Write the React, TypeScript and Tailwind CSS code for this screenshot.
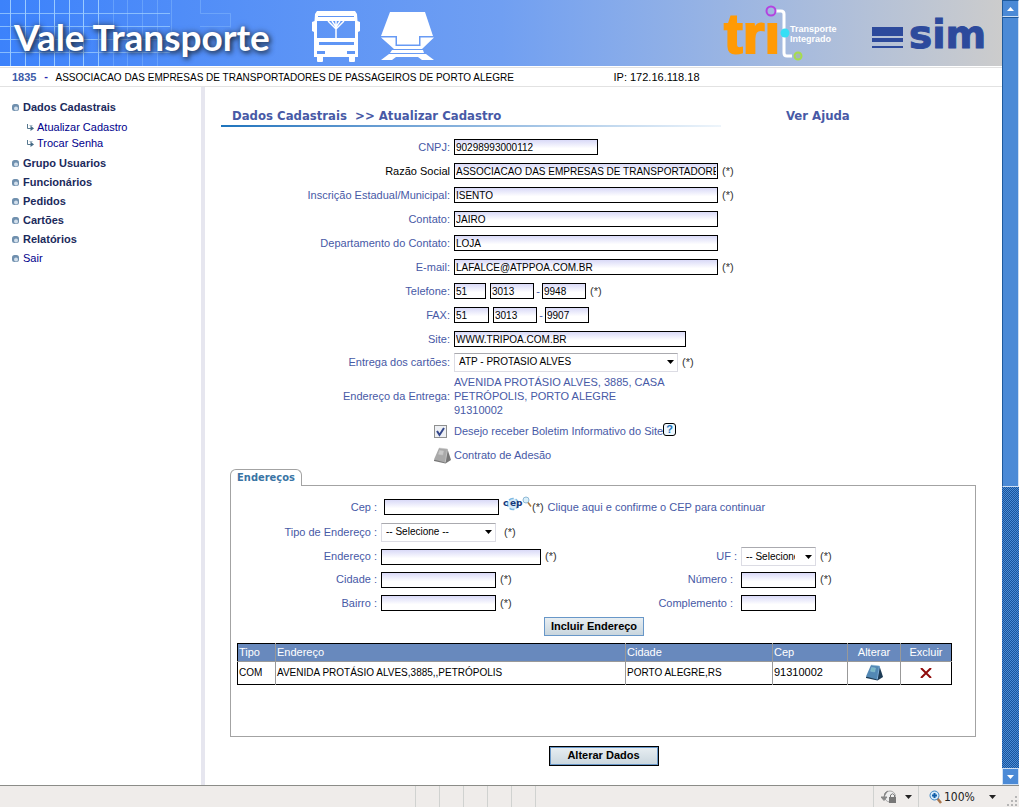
import React, { useState } from "react";

const INPUT =
  "h-4 border border-black bg-linear-to-b from-[#d9d9f7] to-white to-60% px-px pt-px text-[10px] leading-3 text-black outline-none";
const LABEL = "text-right text-[11px] text-[#4759a6]";

const menu = ["Grupo Usuarios", "Funcionários", "Pedidos", "Cartões", "Relatórios"];

const Required = () => <span className="text-[11px] text-[#333]">(*)</span>;

const Arrow = () => (
  <svg className="h-1 w-[7px]" viewBox="0 0 7 4" fill="currentColor" aria-hidden="true">
    <path d="M0 0h7L3.5 4z" />
  </svg>
);

const Bullet = () => (
  <svg className="h-[7px] w-[7px]" viewBox="0 0 7 7" aria-hidden="true">
    <rect width="7" height="7" rx="2.5" fill="#7090ae" />
    <circle cx="4" cy="4.5" r="2" fill="#d3e0ec" />
  </svg>
);

const SubArrow = () => (
  <svg className="h-[7px] w-2" viewBox="0 0 8 7" fill="none" stroke="#56788f" aria-hidden="true">
    <path d="M1.5 0v4.5H6" />
    <path d="M4.5 1.500v5.500L8 4.500z" fill="#456a85" stroke="none" />
    <path d="M3.5 1.5h3" stroke="#a9bccb" />
  </svg>
);

const BookIcon = ({ blue }: { blue?: boolean }) => (
  <svg className="h-[17px] w-[17px]" viewBox="0 0 17 17" aria-hidden="true">
    <path d="M13.500 2L17 13l-5.500 3.500L0 14v-1z" fill={blue ? "#1d3b55" : "#777"} />
    <path d="M5 1l8.500 1-2.500 13.500L0 12.500z" fill={blue ? "#5288b4" : "#a9a9a9"} />
    <path d="M5 1l8.500 1M5.500 3.500l4 .5-.8 4-4.200-.8z" fill={blue ? "#79b8c4" : "#c9c9c9"} stroke={blue ? "#8fc0d8" : "#c4c4c4"} strokeWidth=".5" />
    <path d="M13.500 2l-2.300 13.500" stroke={blue ? "#7fb0dc" : "#c4c4c4"} />
  </svg>
);

const BusIcon = () => (
  <svg className="h-[51px] w-12" viewBox="0 0 48 51" aria-hidden="true">
    <path
      fill="#fff"
      fillRule="evenodd"
      d="M5 0h38l2 3 .5 7 2.500 1v9l-2 1v25h-3v4q0 1-1 1h-4q-1 0-1-1v-4H11v4q0 1-1 1H6q-1 0-1-1v-4H2V21l-2-1v-9l2.500-1L3 3zM6 5v1h36V5zM5 10v17h38V10zM7 31v3h35v-3zM5 40v3h8v-3zm30 0v3h8v-3z"
    />
    <path d="M24 9v19M16 10l8 8 8-8M20 10l4 6 4-6" stroke="#fff" strokeWidth="1.500" fill="none" />
    <path d="M17 38h14l1 6H16z" fill="#fff" />
  </svg>
);

const TrainIcon = () => (
  <svg className="h-12 w-[53px]" viewBox="0 0 53 48" fill="#fff" aria-hidden="true">
    <path d="M9 0h35l8 24H38v8.500H16V24H0z" />
    <path d="M0 25.500h14.500V34h25v-8.500H53L41 37H13z" />
    <path d="M11 38h31l1 3H9zM8 42h37l8 6H41l-4-3H15l-4 3H0z" />
  </svg>
);

const TriLogo = () => (
  <svg className="h-[58px] w-[116px] overflow-visible" viewBox="0 0 116 58" role="img" aria-label="tri Transporte Integrado">
    <text x="1" y="49" fill="#ff9a05" stroke="#ff9a05" strokeWidth="2" className="font-['Liberation_Sans',sans-serif] text-[56px] font-bold">
      trı
    </text>
    <path d="M52 7h6q3 0 3 3v39q0 3 3 3h5" fill="none" stroke="#fff" strokeWidth="3" />
    <circle cx="48" cy="7" r="4.500" fill="none" stroke="#b443e0" strokeWidth="2" />
    <circle cx="62" cy="29" r="4.500" fill="#35dff5" />
    <circle cx="75" cy="52" r="3.500" fill="#a5b7b5" stroke="#a6dd4b" strokeWidth="2" />
    <g fill="#fff" className="font-['Liberation_Sans',sans-serif] text-[9px] font-bold">
      <text x="67" y="28">Transporte</text>
      <text x="67" y="38">Integrado</text>
    </g>
  </svg>
);

const SimLogo = () => (
  <svg className="h-[34px] w-[115px] overflow-visible" viewBox="0 0 115 34" fill="#2d4a9c" role="img" aria-label="sim">
    <path d="M1 11h31v9H1zM1 22h31v4H1zM1 30h31v2H1z" />
    <text x="38" y="32" stroke="#2d4a9c" className="font-['DejaVu_Sans',sans-serif] text-[39px] font-bold">
      sim
    </text>
  </svg>
);

const Banner = () => (
  <header className="relative flex h-[66px] items-center bg-linear-to-r from-[#3c82fb] via-[#709ff2] via-50% to-[#cccccc] pr-4 pl-3.5">
    <svg className="absolute top-0 left-0 h-[66px] w-60" viewBox="0 0 240 66" stroke="#9acaff" aria-hidden="true">
      <path fill="none" d="M10.500 0v66M25.500 0v66M39.500 0v66M54.500 0v66M69.500 0v66M83.500 0v66M98.500 0v66" />
      <path fill="none" d="M0 13.500h170M0 26.500h170M0 39.500h170M0 52.500h170" opacity=".8" />
      <path fill="none" d="M113.500 0v66M127.500 0v66M142.500 0v66M157.500 0v66M171.500 0v40M200.500 0v13.500h30v14M200 26.500h30" opacity=".35" />
    </svg>
    <h1 className="relative w-[298px] pt-2 font-['Lato','Open_Sans',sans-serif] text-[37px] leading-[50px] font-bold whitespace-nowrap text-white [text-shadow:2px_2px_5px_#1f3350,0_0_6px_#3d5b8c]">
      Vale Transporte
    </h1>
    <div className="relative flex items-center gap-[21px] pt-1.5">
      <BusIcon />
      <TrainIcon />
    </div>
    <div className="ml-auto flex items-center gap-8">
      <TriLogo />
      <SimLogo />
    </div>
  </header>
);

const Sidebar = () => (
  <nav className="w-[201px] shrink-0 pt-[11px] pl-3 text-[11px] text-[#00008c]">
    <a href="#dados" className="flex h-[19px] items-center gap-1 font-bold text-[#1b2a5c]">
      <Bullet />
      Dados Cadastrais
    </a>
    <ul className="mt-0.5 mb-[3px] pl-3.5">
      {["Atualizar Cadastro", "Trocar Senha"].map((item) => (
        <li key={item}>
          <a href="#sub" className="flex h-4 items-center gap-[3px]">
            <SubArrow />
            {item}
          </a>
        </li>
      ))}
    </ul>
    {menu.map((item) => (
      <a key={item} href="#menu" className="flex h-[19px] items-center gap-1 font-bold text-[#1b2a5c]">
        <Bullet />
        {item}
      </a>
    ))}
    <a href="#sair" className="flex h-[19px] items-center gap-1">
      <Bullet />
      Sair
    </a>
  </nav>
);

type FieldProps = {
  id: string;
  label: string;
  value?: string;
  width?: string;
  required?: boolean;
  dark?: boolean;
};

const Field = ({ id, label, value = "", width = "w-[264px]", required, dark }: FieldProps) => (
  <div className="flex h-6 items-center gap-1">
    <label htmlFor={id} className={`w-[229px] text-right text-[11px] ${dark ? "text-black" : "text-[#4759a6]"}`}>
      {label}
    </label>
    <input id={id} defaultValue={value} className={`${INPUT} ${width}`} />
    {required && <Required />}
  </div>
);

type PhoneProps = {
  id: string;
  label: string;
  parts: string[];
  areaWidth?: string;
  required?: boolean;
};

const PhoneField = ({ id, label, parts, areaWidth = "w-8", required }: PhoneProps) => (
  <div className="flex h-6 items-center gap-1">
    <label htmlFor={id} className={`w-[229px] ${LABEL}`}>
      {label}
    </label>
    <input id={id} defaultValue={parts[0]} className={`${INPUT} ${areaWidth}`} />
    <div className="flex items-center text-[11px] text-[#4759a6]">
      <input aria-label={`${label} prefixo`} defaultValue={parts[1]} className={`${INPUT} w-11`} />
      <span className="w-2 text-center">-</span>
      <input aria-label={`${label} número`} defaultValue={parts[2]} className={`${INPUT} w-11`} />
    </div>
    {required && <Required />}
  </div>
);

const Select = ({ id, width, option }: { id: string; width: string; option: string }) => (
  <div className={`relative flex items-center ${width}`}>
    <select
      id={id}
      className="h-[19px] w-full appearance-none border border-[#dcdce4] border-t-[#aaaaaf] bg-white pr-5 pl-1 text-[10px] leading-3 text-black"
    >
      <option>{option}</option>
    </select>
    <span className="pointer-events-none absolute right-1 flex text-black">
      <Arrow />
    </span>
  </div>
);

const PanelLabel = ({ id, text }: { id: string; text: string }) => (
  <label htmlFor={id} className={`w-[146px] ${LABEL}`}>
    {text} :
  </label>
);

const SideLabel = ({ id, text }: { id: string; text: string }) => (
  <label htmlFor={id} className={`w-[106px] pr-1 ${LABEL}`}>
    {text} :
  </label>
);

const CepIcon = () => (
  <svg className="h-4 w-[29px] overflow-visible" viewBox="0 0 29 16" aria-hidden="true">
    <circle cx="10" cy="8" r="5.500" fill="#d8ecf8" stroke="#7db9e3" strokeWidth="1.500" strokeDasharray="5 2" />
    <text x="0 7 13" y="10" fill="#173a7c" className="font-['DejaVu_Sans',sans-serif] text-[9px] font-bold">
      cep
    </text>
    <circle cx="23" cy="4" r="3" fill="#d9effa" stroke="#8fb9d6" />
    <path d="M25 6.500l3 4" stroke="#b07a3c" strokeWidth="1.500" />
  </svg>
);

const AddressTable = () => (
  <table className="w-full table-fixed border-collapse border border-black text-left text-[11px]">
    <thead>
      <tr className="h-[17px] bg-[#6889bd] text-white">
        <th className="w-[38px] border-r border-[#999] pl-px font-normal">Tipo</th>
        <th className="border-r border-[#999] pl-px font-normal">Endereço</th>
        <th className="w-[147px] border-r border-[#999] pl-px font-normal">Cidade</th>
        <th className="w-[75px] border-r border-[#999] pl-px font-normal">Cep</th>
        <th className="w-[53px] border-r border-[#999] text-center font-normal">Alterar</th>
        <th className="w-[51px] text-center font-normal">Excluir</th>
      </tr>
    </thead>
    <tbody>
      <tr className="h-[23px] border-t border-[#999] text-[10px] text-black">
        <td className="border-r border-[#999] pl-px">COM</td>
        <td className="border-r border-[#999] pl-px">AVENIDA PROTÁSIO ALVES,3885,,PETRÓPOLIS</td>
        <td className="border-r border-[#999] pl-px">PORTO ALEGRE,RS</td>
        <td className="border-r border-[#999] pl-px text-[11px]">91310002</td>
        <td className="border-r border-[#999]">
          <button type="button" aria-label="Alterar" className="mx-auto block">
            <BookIcon blue />
          </button>
        </td>
        <td>
          <button type="button" aria-label="Excluir" className="mx-auto block">
            <svg className="h-2.5 w-3" viewBox="0 0 12 10" fill="none" stroke="#8f0a0a" strokeWidth="2" aria-hidden="true">
              <path d="M1 0l10 10M11 0L1 10" />
            </svg>
          </button>
        </td>
      </tr>
    </tbody>
  </table>
);

const AddressPanel = () => (
  <section className="mr-[10px] ml-[9px]">
    <h3 className="relative z-10 -mb-px flex h-[17px] w-[72px] items-center justify-center rounded-t-md border border-b-0 border-[#a3a3a3] bg-white font-['DejaVu_Sans_Condensed','DejaVu_Sans',sans-serif] text-[11px] font-bold text-[#3a74a4]">
      Endereços
    </h3>
    <div className="border border-[#a3a3a3] pt-[9px] pb-[51px]">
      <div className="flex h-6 items-center gap-1">
        <PanelLabel id="cep" text="Cep" />
        <div className="flex items-center gap-1 pl-[3px]">
          <input id="cep" className={`${INPUT} w-[115px]`} />
          <button type="button" aria-label="Buscar CEP" className="mb-1.5">
            <CepIcon />
          </button>
        </div>
        <div className="-ml-1 flex gap-1">
          <Required />
          <a href="#cep" className="text-[11px] text-[#4759a6]">
            Clique aqui e confirme o CEP para continuar
          </a>
        </div>
      </div>
      <div className="flex h-[26px] items-center gap-1">
        <PanelLabel id="tipo" text="Tipo de Endereço" />
        <Select id="tipo" width="w-[115px] mr-1" option="-- Selecione --" />
        <Required />
      </div>
      <div className="flex h-[23px] items-center">
        <div className="flex w-[400px] items-center gap-1">
          <PanelLabel id="endereco" text="Endereço" />
          <input id="endereco" className={`${INPUT} w-40`} />
          <Required />
        </div>
        <div className="flex items-center gap-1">
          <label htmlFor="uf" className={`w-[106px] ${LABEL}`}>
            UF :
          </label>
          <Select id="uf" width="w-[75px]" option="-- Selecione --" />
          <Required />
        </div>
      </div>
      <div className="flex h-[23px] items-center">
        <div className="flex w-[400px] items-center gap-1">
          <PanelLabel id="cidade" text="Cidade" />
          <input id="cidade" className={`${INPUT} w-[115px]`} />
          <Required />
        </div>
        <div className="flex items-center gap-1">
          <SideLabel id="numero" text="Número" />
          <input id="numero" className={`${INPUT} w-[75px]`} />
          <Required />
        </div>
      </div>
      <div className="flex h-6 items-center">
        <div className="flex w-[400px] items-center gap-1">
          <PanelLabel id="bairro" text="Bairro" />
          <input id="bairro" className={`${INPUT} w-[115px]`} />
          <Required />
        </div>
        <div className="flex items-center gap-1">
          <SideLabel id="complemento" text="Complemento" />
          <input id="complemento" className={`${INPUT} w-[75px]`} />
        </div>
      </div>
      <button
        type="button"
        className="mt-0.5 ml-[313px] block h-[19px] w-[100px] border border-[#6897c8] bg-linear-to-b from-[#e8eef2] to-[#c9d6de] pb-0.5 text-[11px] leading-[14px] font-bold text-black"
      >
        Incluir Endereço
      </button>
      <div className="mt-[7px] pr-[23px] pl-1.5">
        <AddressTable />
      </div>
    </div>
  </section>
);

const Scrollbar = () => (
  <div className="flex w-[17px] shrink-0 flex-col bg-[#4b8ad6] text-white" aria-hidden="true">
    <div className="flex h-[17px] items-center justify-center border border-t-[#1f5a9c] border-r-[#cfe0f4] border-b-[#cfe0f4] border-l-[#1f5a9c]">
      <svg className="h-1 w-[7px]" viewBox="0 0 7 4" fill="currentColor">
        <path d="M0 4h7L3.500 0z" />
      </svg>
    </div>
    <div className="flex-5 border border-t-[#1f5a9c] border-r-[#cfe0f4] border-b-[#cfe0f4] border-l-[#1f5a9c]" />
    <div className="flex-3 bg-[conic-gradient(#4b8ad6_25%,#17559b_0_50%,#4b8ad6_0_75%,#17559b_0)] bg-[size:2px_2px]" />
    <div className="flex h-[17px] items-center justify-center border border-[#cfe0f4]">
      <Arrow />
    </div>
  </div>
);

const StatusBar = () => (
  <footer className="flex h-[22px] border-t border-[#8b8c88] bg-[#efecea] text-[#222]">
    <div className="flex-16 border-r border-[#d0d2d0]" />
    {[1, 2, 3, 4, 5].map((n) => (
      <div key={n} className="w-6 border-r border-[#d0d2d0]" />
    ))}
    <div className="flex-13 border-r border-[#d0d2d0]" />
    <button type="button" aria-label="Segurança" className="flex w-[45px] items-center justify-end gap-2 border-r border-[#d0d2d0] pr-1.5">
      <svg className="h-3.5 w-4" viewBox="0 0 16 14" aria-hidden="true">
        <circle cx="9" cy="6.500" r="5.500" fill="#eee" stroke="#aaa" />
        <path d="M0 7h6L3 10.500zM3 7q0-5 4-6" fill="#888" stroke="#888" />
        <path d="M8 7h7v6H8z" fill="#777" />
        <path d="M9.500 7V5q2-2.500 4 0v2" fill="none" stroke="#777" />
      </svg>
      <Arrow />
    </button>
    <button type="button" className="relative flex w-[100px] items-center pl-2.5 font-['DejaVu_Sans_Condensed','DejaVu_Sans',sans-serif] text-[12px]">
      <svg className="mr-0.5 h-3.5 w-[13px]" viewBox="0 0 13 14" fill="none" aria-hidden="true">
        <path d="M8 8l4 5" stroke="#a8744a" strokeWidth="2.500" />
        <circle cx="5.500" cy="5.500" r="4.500" fill="#d5eafa" stroke="#3f86c4" />
        <path d="M5.500 3v5M3 5.500h5" stroke="#125ea8" strokeWidth="2" />
      </svg>
      100%
      <span className="ml-3.5 flex">
        <Arrow />
      </span>
      <svg className="absolute right-0 bottom-0 h-3 w-3" viewBox="0 0 12 12" fill="#b5b5b5" aria-hidden="true">
        <path d="M8 1h2v2H8zM8 5h2v2H8zM4 5h2v2H4zM8 9h2v2H8zM4 9h2v2H4zM0 9h2v2H0z" />
      </svg>
    </button>
  </footer>
);

export default function App() {
  const [newsletter, setNewsletter] = useState(true);

  return (
    <div className="flex min-h-screen flex-col bg-white font-['Liberation_Sans',Arial,sans-serif]">
      <div className="flex flex-1">
        <div className="flex min-w-0 flex-1 flex-col">
          <Banner />
          <div className="mt-px flex h-5 items-center border-y border-[#e2e2e2] pt-px pl-3 text-[11px] text-black">
            <b className="text-[#3c5ba9]">1835</b>
            <span className="w-[19px] pb-0.5 text-center font-bold text-[#2a2ab0]">-</span>
            <span className="w-[558px] text-[10px]">
              ASSOCIACAO DAS EMPRESAS DE TRANSPORTADORES DE PASSAGEIROS DE PORTO ALEGRE
            </span>
            <span>IP: 172.16.118.18</span>
          </div>

          <div className="flex flex-1">
            <Sidebar />
            <main className="min-w-0 flex-1 border-l-4 border-[#e6e6ef] px-4">
              <div className="flex h-10 items-end font-['DejaVu_Sans_Condensed','DejaVu_Sans',sans-serif] text-[13px] font-bold text-[#4759a6]">
                <div className="w-[500px]">
                  <h2 className="pl-[11px] whitespace-pre">{"Dados Cadastrais  >> Atualizar Cadastro"}</h2>
                  <div className="h-0.5 bg-linear-to-r from-[#1c74bd] to-[#eef5fb]" />
                </div>
                <a href="#ajuda" className="ml-[65px] pb-0.5">
                  Ver Ajuda
                </a>
              </div>

              <form className="pt-2" onSubmit={(e) => e.preventDefault()}>
                <Field id="cnpj" label="CNPJ:" value="90298993000112" width="w-36" />
                <Field id="razao" label="Razão Social" value="ASSOCIACAO DAS EMPRESAS DE TRANSPORTADORES DE PASSAGEIROS" required dark />
                <Field id="inscricao" label="Inscrição Estadual/Municipal:" value="ISENTO" required />
                <Field id="contato" label="Contato:" value="JAIRO" />
                <Field id="departamento" label="Departamento do Contato:" value="LOJA" />
                <Field id="email" label="E-mail:" value="LAFALCE@ATPPOA.COM.BR" required />
                <PhoneField id="telefone" label="Telefone:" parts={["51", "3013", "9948"]} required />
                <PhoneField id="fax" label="FAX:" parts={["51", "3013", "9907"]} areaWidth="w-[35px]" />
                <Field id="site" label="Site:" value="WWW.TRIPOA.COM.BR" width="w-[232px]" />
                <div className="flex h-[22px] items-center gap-1">
                  <label htmlFor="entrega" className={`w-[229px] ${LABEL}`}>
                    Entrega dos cartões:
                  </label>
                  <Select id="entrega" width="w-56" option="ATP - PROTASIO ALVES" />
                  <Required />
                </div>
                <div className="flex items-center gap-1 py-0.5 text-[11px] leading-[14px] text-[#4759a6]">
                  <span className="w-[229px] text-right">Endereço da Entrega:</span>
                  <p>
                    AVENIDA PROTÁSIO ALVES, 3885, CASA
                    <br />
                    PETRÓPOLIS, PORTO ALEGRE
                    <br />
                    91310002
                  </p>
                </div>
                <div className="flex h-[25px] items-center text-[11px] text-[#4759a6]">
                  <input
                    id="boletim"
                    type="checkbox"
                    checked={newsletter}
                    onChange={(e) => setNewsletter(e.target.checked)}
                    className="peer ml-[213px] h-[13px] w-[13px] appearance-none border border-[#8e8f8f] bg-[#eef0f4]"
                  />
                  {/* tick drawn over the box */}
                  <svg className="pointer-events-none invisible relative -ml-[13px] h-[13px] w-[13px] peer-checked:visible" viewBox="0 0 13 13" fill="none" stroke="#33478c" strokeWidth="2" aria-hidden="true">
                    <path d="M3 6l2.500 4L10 3" />
                  </svg>
                  <label htmlFor="boletim" className="ml-[7px]">
                    Desejo receber Boletim Informativo do Site
                  </label>
                  <button
                    type="button"
                    aria-label="Ajuda sobre o boletim"
                    className="mb-1 h-[13px] w-[13px] rounded-[3px] border border-black bg-[#eef8ff] text-[11px] leading-[11px] font-bold text-[#2272b8]"
                  >
                    ?
                  </button>
                </div>
                <div className="flex h-[23px] items-center pl-[213px] text-[11px] text-[#4759a6]">
                  <a href="#contrato" className="flex items-center gap-[3px]">
                    <BookIcon />
                    Contrato de Adesão
                  </a>
                </div>

                <div className="pt-0.5">
                  <AddressPanel />
                </div>
                <div className="flex justify-center py-[9px]">
                  <button
                    type="submit"
                    className="h-5 w-[110px] border border-black bg-linear-to-b from-[#e8eef2] to-[#c9d6de] pb-0.5 text-[11px] leading-4 font-bold text-black inset-ring inset-ring-[#6897c8]"
                  >
                    Alterar Dados
                  </button>
                </div>
              </form>
            </main>
          </div>
        </div>
        <Scrollbar />
      </div>
      <StatusBar />
    </div>
  );
}
